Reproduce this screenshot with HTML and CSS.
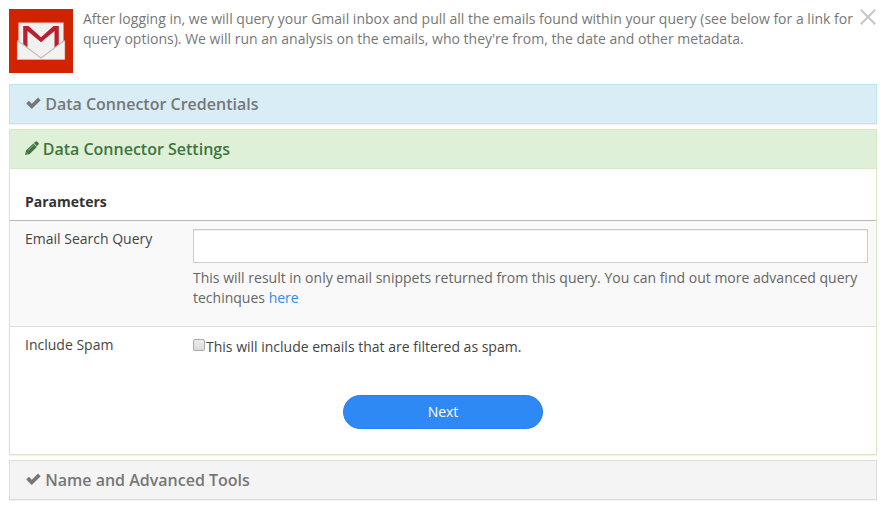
FILE: index.html
```html
<!DOCTYPE html>
<html lang="en">
<head>
<meta charset="utf-8">
<title>Data Connector</title>
<link rel="stylesheet" href="styles.css">
</head>
<body>
<header class="intro">
  <svg class="logo" viewBox="0 0 64 64" aria-hidden="true">
    <path fill="#d22300" d="M0 0h64v64H0z"/>
    <path fill="#f1f1f1" stroke="#e0917f" stroke-width=".7" d="M9.500 13.700h45v17.800l1.200 1.200V50.500H8.300V32.700l1.200-1.200z"/>
    <path fill="#b9202b" d="M14.200 37.500V17h5.300L32 28.300 44.500 17h5.300v20.500l-4.300 3.300V22L32 33.300 18.500 22v18.800z"/>
    <path fill="#f2f2f2" d="M8.500 31.500L32 49l23.500-17.500v18.800h-47z"/>
    <path fill="none" stroke="#bfbfbf" stroke-width="1.200" d="M8.500 31.500L32 49l23.500-17.500"/>
  </svg>
  <p class="intro-text">After logging in, we will query your Gmail inbox and pull all the emails found within your query (see below for a link for query options). We will run an analysis on the emails, who they're from, the date and other metadata.</p>
  <button class="close" type="button" aria-label="Close">
    <svg viewBox="0 0 16 16"><path d="M.7.7l14.600 14.600M15.300.7L.7 15.300"/></svg>
  </button>
</header>

<section class="panel panel-info">
  <h4 class="panel-heading"><svg class="check" viewBox="0 0 15 12"><path d="M.2 6.500L2.900 3.800 5.800 6.700 12 .5 14.700 3.200 5.800 12z"/></svg>Data Connector Credentials</h4>
</section>

<section class="panel panel-success">
  <h4 class="panel-heading"><svg class="pencil" viewBox="0 0 14 14"><path d="M9 2l1.600-1.500q.7-.6 1.400 0l1.500 1.500q.6.700 0 1.400L11.800 5.200zM8.300 2.400l3.500 3.500L4.700 13 0 14l1-4.600z"/><path class="pencil-line" d="M3.200 9.400L8.800 4M1.400 11.500l1.200 1.200"/></svg>Data Connector Settings</h4>
  <form class="params">
    <div class="params-title">Parameters</div>
    <div class="row row-striped">
      <label class="name" for="query">Email Search Query</label>
      <div class="field">
        <input class="query" id="query" type="text">
        <p class="help">This will result in only email snippets returned from this query. You can find out more advanced query techinques <a href="#">here</a></p>
      </div>
    </div>
    <div class="row row-spam">
      <span class="name">Include Spam</span>
      <label class="spam"><input class="box" type="checkbox">This will include emails that are filtered as spam.</label>
    </div>
    <button class="next" type="button">Next</button>
  </form>
</section>

<section class="panel panel-default">
  <h4 class="panel-heading"><svg class="check" viewBox="0 0 15 12"><path d="M.2 6.500L2.900 3.800 5.800 6.700 12 .5 14.700 3.200 5.800 12z"/></svg>Name and Advanced Tools</h4>
</section>
</body>
</html>
```
FILE: styles.css
```css
* { box-sizing: border-box; }

body {
  margin: 0;
  padding: 9px 10px 0 9px;
  background: #fff;
  color: #444;
  font: 14px/20px "Open Sans", sans-serif;
}

.intro { display: flex; height: 75px; }
.logo { flex: none; width: 64px; height: 64px; margin-right: 10px; }
.intro-text { flex: 1; margin: 0; color: #777; letter-spacing: .008px; }

.close {
  flex: none;
  width: 16px;
  height: 16px;
  margin: 0 1px 0 3px;
  padding: 0;
  border: 0;
  background: none;
}
.close svg { display: block; fill: none; stroke: #c8c8c8; stroke-width: 2.1; }

.panel {
  margin-bottom: 5px;
  border: 1px solid #ddd;
  background: #fff;
  box-shadow: 0 1px 1px rgba(0, 0, 0, .05);
}
.panel-heading {
  display: flex;
  align-items: center;
  height: 38px;
  margin: 0;
  padding: 0 15px;
  background: #f4f4f4;
  color: #777;
  font-size: 16px;
  font-weight: 600;
  line-height: 18px;
}
.panel-info { border-color: #bce8f1; }
.panel-info .panel-heading { background: #d9edf7; }
.panel-success { border-color: #d6e9c6; }
.panel-success .panel-heading {
  height: 39px;
  border-bottom: 1px solid #d6e9c6;
  background: #dff0d8;
  color: #3c763d;
}

.check { width: 15px; height: 12px; margin: 0 4.500px 2px .7px; fill: #777; }
.pencil { width: 14px; height: 14px; margin: 0 3.700px 2px 0; fill: #3c763d; }
.pencil-line { fill: none; stroke: #dff0d8; stroke-width: .5; }

.params { height: 285px; }
.params-title {
  height: 52px;
  padding: 23px 15px 0;
  border-bottom: 1px solid #b7b7b7;
  color: #333;
  font-weight: 700;
}
.row { display: flex; padding: 8px 8px 8px 15px; }
.row-striped { height: 106px; border-bottom: 1px solid #ddd; background: #f9f9f9; }
.name { flex: none; width: 168px; }
.field { flex: 1; }
.query {
  display: block;
  width: 100%;
  height: 34px;
  padding: 6px 12px;
  border: 1px solid #ccc;
  background: #fff;
  box-shadow: inset 0 1px 1px rgba(0, 0, 0, .075);
  font: inherit;
}
.help { margin: 5px 0 10px; color: #666; letter-spacing: .006px; }
.help a { color: #2f89f5; text-decoration: none; }

.row-spam { height: 68px; }
.spam { display: flex; align-items: flex-start; padding-top: 2px; }
.box {
  appearance: none;
  width: 12px;
  height: 12px;
  margin: 2px 1px 0 0;
  border: 1px solid #a9a9a9;
  border-radius: 2px;
  background: linear-gradient(#ededed, #dcdcdc);
}
.next {
  display: block;
  width: 200px;
  height: 34px;
  margin: 0 auto;
  padding: 0;
  border: 1px solid #2681f3;
  border-radius: 17px;
  background: #2f89f5;
  color: #fff;
  font: inherit;
}
```
